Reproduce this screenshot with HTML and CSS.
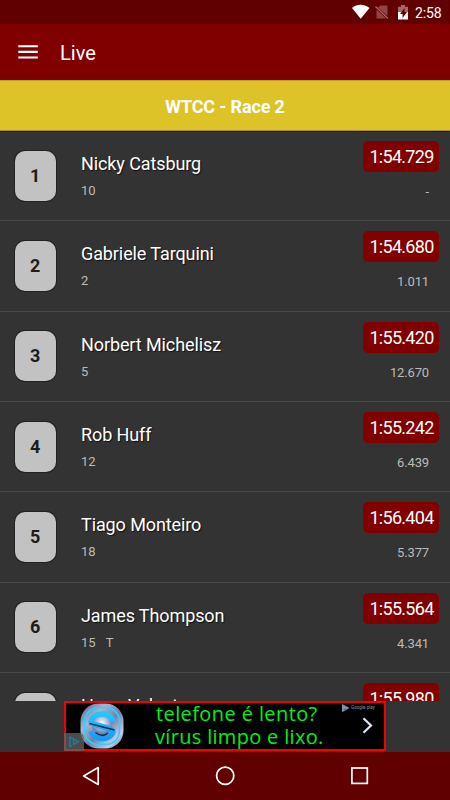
FILE: index.html
```html
<!DOCTYPE html>
<html lang="en">
<head>
<meta charset="utf-8">
<title>Live</title>
<link rel="stylesheet" href="styles.css">
</head>
<body>
<div class="screen">
  <div class="status">
    <svg class="status-icons" width="60" height="24" viewBox="0 0 60 24">
      <path d="M2 8C7 3.800 14 3.800 19.500 8L10.700 18.800Z" fill="#fff"/>
      <g opacity=".42">
        <path d="M30.500 5.500h7v10.600L28 7.500z" fill="#d8a0a0"/>
        <path d="M26.500 9.500v9h9.600z" fill="#d8a0a0"/>
        <path d="M25.500 6.500l12.500 12" stroke="#fff" stroke-width="1.200"/>
      </g>
      <path d="M51 5h4v1.800h3V12H48V6.800h3z" fill="#a66"/>
      <path d="M48 12h10v7.500H48z" fill="#fff"/>
      <path d="M54.500 8l-4.500 6h2.600v4l4.400-6h-2.500z" fill="#650000"/>
    </svg>
    <span class="clock">2:58</span>
  </div>
  <header class="appbar">
    <svg width="20" height="14" viewBox="0 0 20 14" fill="#fff"><path d="M.3 .2h19.500v2.100H.3zM.3 5.800h19.500v2.100H.3zM.3 11.400h19.500v2.100H.3z"/></svg>
    <h1>Live</h1>
  </header>
  <div class="race">WTCC - Race 2</div>
  <main class="list">
    <div class="row"><div class="pos">1</div><div class="driver"><div class="name">Nicky Catsburg</div><div class="num">10</div></div><div class="timing"><div class="time">1:54.729</div><div class="gap">-</div></div></div>
    <div class="row"><div class="pos">2</div><div class="driver"><div class="name">Gabriele Tarquini</div><div class="num">2</div></div><div class="timing"><div class="time">1:54.680</div><div class="gap">1.011</div></div></div>
    <div class="row"><div class="pos">3</div><div class="driver"><div class="name">Norbert Michelisz</div><div class="num">5</div></div><div class="timing"><div class="time">1:55.420</div><div class="gap">12.670</div></div></div>
    <div class="row"><div class="pos">4</div><div class="driver"><div class="name">Rob Huff</div><div class="num">12</div></div><div class="timing"><div class="time">1:55.242</div><div class="gap">6.439</div></div></div>
    <div class="row"><div class="pos">5</div><div class="driver"><div class="name">Tiago Monteiro</div><div class="num">18</div></div><div class="timing"><div class="time">1:56.404</div><div class="gap">5.377</div></div></div>
    <div class="row"><div class="pos">6</div><div class="driver"><div class="name">James Thompson</div><div class="num">15<span class="tag">T</span></div></div><div class="timing"><div class="time">1:55.564</div><div class="gap">4.341</div></div></div>
    <div class="row"><div class="pos"></div><div class="driver"><div class="name">Hugo Valente</div></div><div class="timing"><div class="time">1:55.980</div></div></div>
  </main>
  <div class="ad-strip">
    <div class="ad">
      <svg class="ad-logo" width="44" height="46" viewBox="0 0 44 46">
        <defs>
          <linearGradient id="metal" x1="0" y1="0" x2="1" y2="1"><stop offset="0" stop-color="#4d5c88"/><stop offset=".3" stop-color="#a9b5d6"/><stop offset=".55" stop-color="#7380ad"/><stop offset=".8" stop-color="#c3cce5"/><stop offset="1" stop-color="#5a6793"/></linearGradient>
          <radialGradient id="shine" cy=".35"><stop offset="0" stop-color="#fff"/><stop offset="1" stop-color="#7584b8"/></radialGradient>
          <linearGradient id="blue" x1="0" y1="0" x2="0" y2="1"><stop offset="0" stop-color="#20c8ff"/><stop offset="1" stop-color="#169cf5"/></linearGradient>
        </defs>
        <rect x=".5" y=".5" width="43" height="45" rx="18" fill="url(#metal)"/>
        <rect x="4.500" y="4.500" width="35" height="37" rx="14" fill="none" stroke="#25d4ff" stroke-width="1.500"/>
        <circle cx="22" cy="23" r="10" fill="url(#shine)"/>
        <path d="M33 18.500C31 8.500 13 8.500 11 18.500c0 2 2 2.500 4 3l14 4c3 1 4 1.500 4 3C31 37.500 14 38.500 11 28" fill="none" stroke="url(#blue)" stroke-width="5.500"/>
        <path d="M9.500 20.500l25 6.500M15.500 29.500q7 5.500 12.500 .5" fill="none" stroke="#17304f" stroke-width="1.500"/>
      </svg>
      <div class="ad-copy"><div class="line-one">telefone é lento?</div><div class="line-two">vírus limpo e lixo.</div></div>
      <div class="ad-side">
        <div class="store"><svg width="8" height="8" viewBox="0 0 8 8"><path d="M0 0l7.500 4L0 8z" fill="#6b9fc0"/><path d="M3 4l2 1.400L1 8z" fill="#b0485c"/></svg><span>Google play</span></div>
        <svg class="chevron" width="11" height="17" viewBox="0 0 11 17" fill="none" stroke="#dce8f4" stroke-width="2.200"><path d="M1.500 1.200L9 8.500 1.500 15.800"/></svg>
      </div>
      <svg class="choices" width="20" height="18" viewBox="0 0 20 18"><path d="M0 0h15q5 0 5 5v13H0z" fill="#666" fill-opacity=".75"/><path d="M9.500 6.500v5l5-2.800-8.500-4.700v9.500l2-.8" fill="none" stroke="#1a82a8" stroke-width="1.300"/></svg>
    </div>
  </div>
  <nav class="navbar">
    <svg width="450" height="48" viewBox="0 0 450 48" fill="none" stroke="#fff" stroke-width="1.700"><path d="M98.200 15.600v16.800L83.700 24z" stroke-linejoin="round"/><circle cx="225.200" cy="23.700" r="8.600"/><rect x="351.900" y="16" width="15.400" height="15.400"/></svg>
  </nav>
</div>
</body>
</html>
```
FILE: styles.css
```css
* { box-sizing: border-box; }
body { margin: 0; background: #333; }
.screen {
  width: 450px;
  height: 800px;
  display: flex;
  flex-direction: column;
  overflow: hidden;
  background: #333;
  color: #fff;
  font-family: Roboto, sans-serif;
}
.screen > * { flex-shrink: 0; }
svg { display: block; flex-shrink: 0; }
.status {
  height: 24px;
  display: flex;
  align-items: center;
  justify-content: flex-end;
  padding-right: 8px;
  background: #600000;
}
.clock { width: 32px; padding-left: 5px; font-size: 14px; letter-spacing: -.15px; line-height: 24px; margin-top: 2px; white-space: nowrap; }
.appbar {
  height: 56px;
  display: flex;
  align-items: center;
  gap: 22px;
  padding: 0 0 0 18px;
  background: #800000;
}
.appbar h1 { margin: 2px 0 0; font-size: 20px; font-weight: 400; line-height: 24px; }
.race {
  height: 51px;
  background: #ddc328;
  border-top: 1px solid #c39c21;
  border-bottom: 1px solid #a99119;
  text-align: center;
  font-size: 18px;
  letter-spacing: -.15px;
  font-weight: 700;
  line-height: 51px;
}
.list { height: 570px; overflow: hidden; box-shadow: inset 0 1px #161a22; }
.row {
  height: 90.330px;
  display: flex;
  align-items: flex-start;
  padding: 0 11px 0 15px;
  border-bottom: 1px solid #484848;
}
.pos {
  width: 40.500px;
  height: 50px;
  margin-top: 19.600px;
  border-radius: 10px;
  background: #c2c2c2;
  box-shadow: 0 0 0 1px #222;
  color: #1c1c1c;
  font-size: 18px;
  font-weight: 700;
  line-height: 50px;
  text-align: center;
}
.driver { flex: 1; padding: 21px 0 0 25.500px; }
.name { font-size: 18px; letter-spacing: -.1px; line-height: 24px; text-shadow: 1px 1px 1px #111; white-space: nowrap; }
.num { margin-top: 5px; font-size: 13px; line-height: 20px; color: #bbb; }
.tag { margin-left: 10px; }
.timing { width: 76px; padding-top: 10px; }
.time {
  height: 31px;
  border-radius: 5px;
  background: #800000;
  font-size: 18px;
  letter-spacing: -.7px;
  padding-left: 1px;
  line-height: 31px;
  text-align: center;
}
.gap { margin: 10px 10px 0 0; font-size: 13px; letter-spacing: -.15px; line-height: 20px; color: #bbb; text-align: right; }
.ad-strip { height: 51px; display: flex; justify-content: center; }
.ad {
  position: relative;
  width: 322px;
  height: 50px;
  display: flex;
  padding-left: 14px;
  background: #000;
  border: 2px solid #f40000;
}
.ad-copy {
  width: 184px;
  padding-left: 31px;
  color: #00f01c;
  font-family: "Open Sans", "Noto Sans", sans-serif;
  font-size: 20px;
  white-space: nowrap;
}
.line-one { line-height: 22px; letter-spacing: .4px; padding-left: 1px; }
.line-two { line-height: 23px; letter-spacing: .32px; }
.ad-side { margin-left: 34px; padding-top: 1px; }
.store { display: flex; align-items: center; gap: 1px; font-size: 4.600px; line-height: 8px; color: #8490a4; white-space: nowrap; }
.chevron { margin: 5px 0 0 20px; }
.choices { position: absolute; left: -2px; bottom: -2px; }
.navbar { height: 48px; background: #600000; }
```
